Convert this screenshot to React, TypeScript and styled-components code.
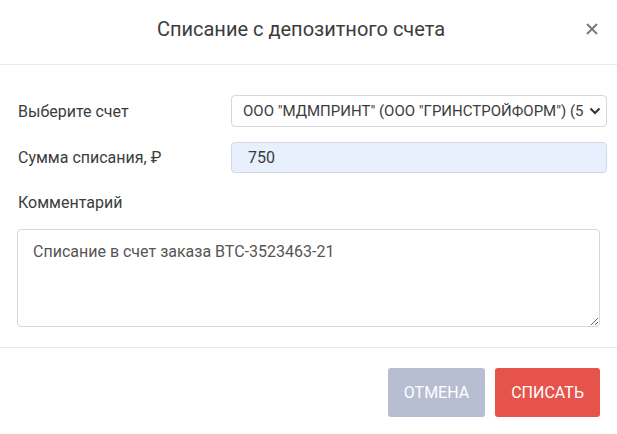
import React from 'react';
import styled, {createGlobalStyle} from 'styled-components';

const GlobalStyle = createGlobalStyle`
  html, body {
    margin: 0;
    padding: 0;
    background: #ffffff;
  }
  body {
    font-family: Roboto, "Liberation Sans", Arial, sans-serif;
    color: #3c3c3c;
  }
`;

const Dialog = styled.div`
  box-sizing: border-box;
  width: 617px;
  height: 434px;
  background: #ffffff;
  display: flex;
  flex-direction: column;
`;

const Header = styled.div`
  position: relative;
  box-sizing: border-box;
  height: 65px;
  padding-right: 15px;
  border-bottom: 1px solid #e6e9ef;
  display: flex;
  align-items: center;
  justify-content: center;
  flex-shrink: 0;
`;

const Title = styled.h4`
  margin: 0 0 6px;
  font-size: 20px;
  font-weight: 400;
  color: #3c3c3c;
`;

const CloseButton = styled.button`
  position: absolute;
  right: 18px;
  top: 22px;
  width: 14px;
  height: 14px;
  padding: 0;
  border: none;
  background: none;
  cursor: pointer;
  display: flex;
`;

const Body = styled.div`
  box-sizing: border-box;
  padding: 30px 17px 20px 18px;
  flex: 1;
  display: flex;
  flex-direction: column;
  border-bottom: 1px solid #e6e9ef;
`;

const Row = styled.div`
  display: grid;
  grid-template-columns: 213px 376px;
  align-items: center;
  margin-bottom: 15px;
`;

const Label = styled.label`
  font-size: 16px;
  color: #3c3c3c;
`;

const SelectWrap = styled.div`
  position: relative;
`;

const Select = styled.select`
  box-sizing: border-box;
  width: 376px;
  height: 32px;
  padding: 0 22px 0 11px;
  border: 1px solid #d3d7de;
  border-radius: 4px;
  background: #ffffff;
  font-family: inherit;
  font-size: 15px;
  color: #3c3c3c;
  appearance: none;
  outline: none;
`;

const Chevron = styled.svg`
  position: absolute;
  right: 6px;
  top: 11px;
  pointer-events: none;
`;

const Input = styled.input`
  box-sizing: border-box;
  width: 376px;
  height: 31px;
  padding: 0 16px;
  border: 1px solid #d3d9e3;
  border-radius: 4px;
  background: #e8f0fe;
  font-family: inherit;
  font-size: 16px;
  color: #3c3c3c;
  outline: none;
`;

const CommentLabel = styled(Label)`
  margin-top: 5px;
  margin-bottom: 17px;
`;

const TextArea = styled.textarea`
  box-sizing: border-box;
  width: 583px;
  margin-left: -1px;
  height: 98px;
  padding: 12px 15px;
  border: 1px solid #d3d7de;
  border-radius: 4px;
  font-family: inherit;
  font-size: 16px;
  color: #555555;
  outline: none;
`;

const Footer = styled.div`
  display: flex;
  justify-content: flex-end;
  gap: 10px;
  padding: 20px 17px 18px;
`;

const Button = styled.button<{$variant: 'muted' | 'danger'}>`
  height: 49px;
  padding: 0 16px;
  border: none;
  border-radius: 3px;
  background: ${p => (p.$variant === 'danger' ? '#e5534b' : '#b7bed2')};
  color: #ffffff;
  font-family: inherit;
  font-size: 16px;
  text-transform: uppercase;
  cursor: pointer;
`;

export default () => {
  return (
    <>
      <GlobalStyle />
      <Dialog>
        <Header>
          <Title>Списание с депозитного счета</Title>
          <CloseButton aria-label="Закрыть">
            <svg width="14" height="14" viewBox="0 0 14 14">
              <path d="M2 2 L12 12 M12 2 L2 12" stroke="#7a7a7a" strokeWidth="2" />
            </svg>
          </CloseButton>
        </Header>
        <Body>
          <Row>
            <Label>Выберите счет</Label>
            <SelectWrap>
              <Select defaultValue="1">
                <option value="1">ООО "МДМПРИНТ" (ООО "ГРИНСТРОЙФОРМ") (5000 ₽)</option>
              </Select>
              <Chevron width="12" height="10" viewBox="0 0 12 10">
                <path d="M1.5 2.5 L6 7 L10.5 2.5" fill="none" stroke="#333" strokeWidth="2" />
              </Chevron>
            </SelectWrap>
          </Row>
          <Row>
            <Label>Сумма списания, ₽</Label>
            <Input defaultValue="750" />
          </Row>
          <CommentLabel>Комментарий</CommentLabel>
          <TextArea defaultValue="Списание в счет заказа ВТС-3523463-21" />
        </Body>
        <Footer>
          <Button $variant="muted">Отмена</Button>
          <Button $variant="danger">Списать</Button>
        </Footer>
      </Dialog>
    </>
  );
};
